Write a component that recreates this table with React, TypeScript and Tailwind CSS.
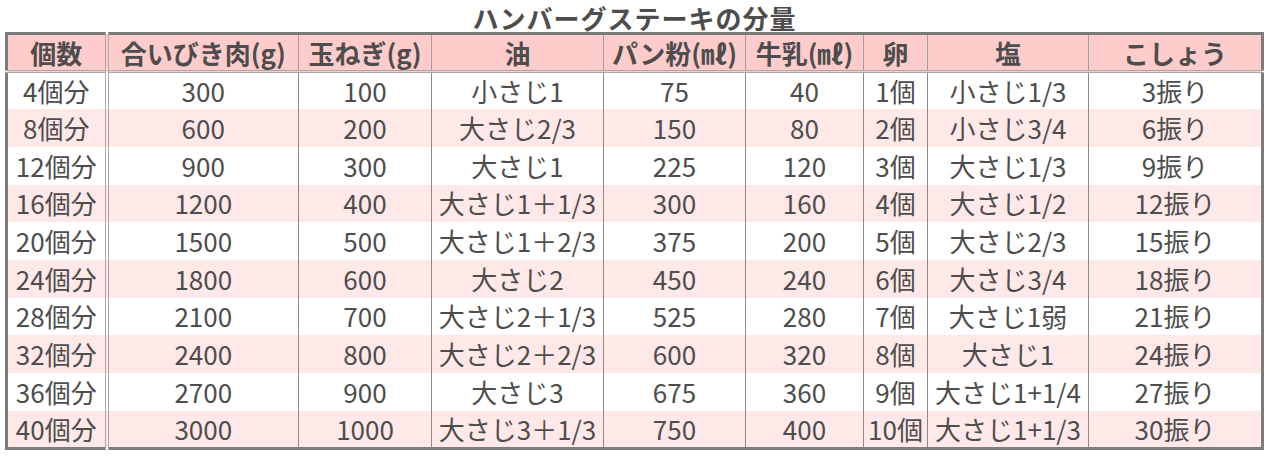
import React from 'react';

const headers = ['個数', '合いびき肉(g)', '玉ねぎ(g)', '油', 'パン粉(㎖)', '牛乳(㎖)', '卵', '塩', 'こしょう'];

const rows: string[][] = [
  ['4個分', '300', '100', '小さじ1', '75', '40', '1個', '小さじ1/3', '3振り'],
  ['8個分', '600', '200', '大さじ2/3', '150', '80', '2個', '小さじ3/4', '6振り'],
  ['12個分', '900', '300', '大さじ1', '225', '120', '3個', '大さじ1/3', '9振り'],
  ['16個分', '1200', '400', '大さじ1＋1/3', '300', '160', '4個', '大さじ1/2', '12振り'],
  ['20個分', '1500', '500', '大さじ1＋2/3', '375', '200', '5個', '大さじ2/3', '15振り'],
  ['24個分', '1800', '600', '大さじ2', '450', '240', '6個', '大さじ3/4', '18振り'],
  ['28個分', '2100', '700', '大さじ2＋1/3', '525', '280', '7個', '大さじ1弱', '21振り'],
  ['32個分', '2400', '800', '大さじ2＋2/3', '600', '320', '8個', '大さじ1', '24振り'],
  ['36個分', '2700', '900', '大さじ3', '675', '360', '9個', '大さじ1+1/4', '27振り'],
  ['40個分', '3000', '1000', '大さじ3＋1/3', '750', '400', '10個', '大さじ1+1/3', '30振り'],
];

// column widths measured off the grid lines
const widths = ['w-[100px]', 'w-[192px]', 'w-[133px]', 'w-[172px]', 'w-[142px]', 'w-[118px]', 'w-[64px]', 'w-[161px]', ''];

export default function App() {
  return (
    <div
      className="w-[1269px] h-[456px] bg-white px-[5px] text-[#4d4d4d]"
      style={{ fontFamily: '"Noto Sans CJK JP", "Noto Sans", sans-serif' }}
    >
      <h1 className="h-[32px] pt-[3px] text-center text-[26px] leading-[29px] font-bold tracking-[1px]">
        ハンバーグステーキの分量
      </h1>
      <table className="w-[1259px] table-fixed border-collapse border-[3px] border-[#7c7c7c]">
        <colgroup>
          {widths.map((w, i) => (
            <col key={i} className={w} />
          ))}
        </colgroup>
        <thead>
          <tr className="h-[38px] bg-[#ffcccc] border-b-[3px] border-double border-[#a8a8a8]">
            {headers.map((h, i) => (
              <th
                key={h}
                className={
                  'p-0 text-[26px] leading-[30px] font-bold whitespace-nowrap text-center ' +
                  (i === 0
                    ? 'border-r-4 border-double border-[#a8a8a8]'
                    : i < headers.length - 1
                    ? 'border-r border-[#a0a0a0]'
                    : '')
                }
              >
                {h}
              </th>
            ))}
          </tr>
        </thead>
        <tbody>
          {rows.map((r, ri) => (
            <tr key={ri} className={'h-[37.7px] ' + (ri % 2 === 1 ? 'bg-[#ffe8e8]' : 'bg-white')}>
              {r.map((c, ci) => (
                <td
                  key={ci}
                  className={
                    'p-0 text-[26px] leading-[30px] whitespace-nowrap text-center ' +
                    (ci === 0
                      ? 'border-r-4 border-double border-[#a8a8a8]'
                      : ci < r.length - 1
                      ? 'border-r border-[#8a8a8a]'
                      : '')
                  }
                >
                  {c}
                </td>
              ))}
            </tr>
          ))}
        </tbody>
      </table>
    </div>
  );
}
